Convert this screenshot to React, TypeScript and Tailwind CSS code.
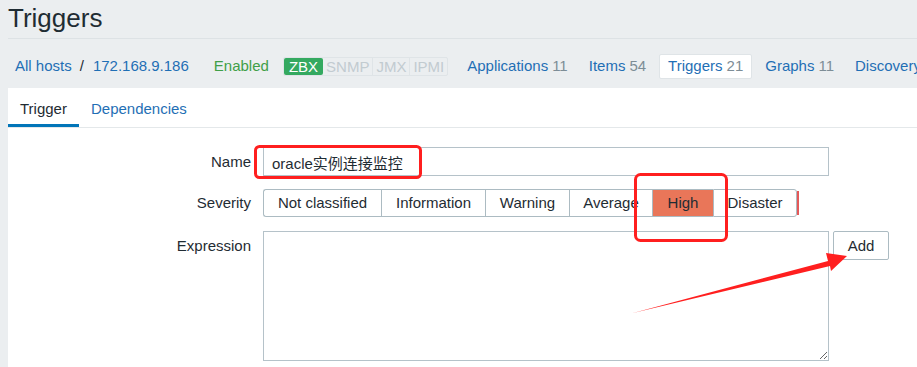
const severities = [
  { label: "Not classified", w: "w-[118px]" },
  { label: "Information", w: "w-[104px]" },
  { label: "Warning", w: "w-[84px]" },
  { label: "Average", w: "w-[83px]" },
  { label: "High", w: "w-[61px]" },
  { label: "Disaster", w: "w-[84px]" },
];

const hostTabs = [
  { label: "Applications", count: "11" },
  { label: "Items", count: "54" },
  { label: "Triggers", count: "21", active: true },
  { label: "Graphs", count: "11" },
  { label: "Discovery rules", count: "" },
];

export default function App() {
  return (
    <div
      className="relative h-[367px] w-[917px] overflow-hidden bg-[#ebeef0] text-[15px] text-[#1f2c33]"
      style={{ fontFamily: '"Liberation Sans", "Noto Sans CJK SC", Arial, sans-serif' }}
    >
      {/* ─── Header ─── */}
      <div className="ml-2 h-[39px] border-b border-[#dde2e5] pt-[5px] text-[26px] leading-none">
        Triggers
      </div>

      {/* ─── Host nav ─── */}
      <div className="ml-2 flex h-[49px] items-center whitespace-nowrap pt-[5px]">
        <a className="ml-[7px] text-[#1f6fb5]">All hosts</a>
        <span className="ml-2">/</span>
        <a className="ml-[9px] text-[#1f6fb5]">172.168.9.186</a>
        <span className="ml-[25px] text-[#3f9f48]">Enabled</span>
        <div className="ml-[14px] flex h-[19px] items-stretch rounded-[2px] border border-[#dfe4e7] text-[15px] leading-[17px]">
          <span className="rounded-[2px] bg-[#34a960] px-[5px] text-white">ZBX</span>
          <span className="border-r border-[#dfe4e7] px-[3px] text-[#c2cbd0]">SNMP</span>
          <span className="border-r border-[#dfe4e7] px-[3px] text-[#c2cbd0]">JMX</span>
          <span className="px-[3px] text-[#c2cbd0]">IPMI</span>
        </div>
        <div className="ml-[11px] flex items-center gap-[5px]">
          {hostTabs.map((t) => (
            <div
              key={t.label}
              className={`flex h-[25px] items-center rounded-[2px] px-2 ${
                t.active ? "border border-[#dfe4e7] bg-white" : ""
              }`}
            >
              <span className="text-[#1f6fb5]">{t.label}</span>
              {t.count && <span className="ml-1 text-[#7d8d96]">{t.count}</span>}
            </div>
          ))}
        </div>
      </div>

      {/* ─── Form panel ─── */}
      <div className="ml-2 h-[279px] bg-white">
        <div className="flex h-[40px] border-b border-[#e4e8ea]">
          <div className="relative flex items-center px-3 pt-[3px]">
            Trigger
            <span className="absolute bottom-0 left-0 right-0 h-[3px] bg-[#0275b8]" />
          </div>
          <div className="flex items-center px-3 pt-[3px] text-[#1f6fb5]">Dependencies</div>
        </div>

        <div className="mt-[19px] flex items-center">
          <label className="w-[255px] pr-3 pt-px text-right">Name</label>
          <input
            readOnly
            value="oracle实例连接监控"
            className="h-[29px] w-[566px] border border-[#b5c2c9] px-2 pt-px text-[15px] text-[#1f2c33] outline-none"
          />
        </div>

        <div className="mt-[13px] flex items-center">
          <label className="w-[255px] pr-3 pt-px text-right">Severity</label>
          <div className="flex h-[28px]">
            {severities.map((s, i) => (
              <div
                key={s.label}
                className={`flex items-center justify-center whitespace-nowrap border-y border-l pt-px border-[#acbbc2] ${s.w} ${
                  i === 0 ? "rounded-l-[3px]" : ""
                } ${i === severities.length - 1 ? "rounded-r-[3px] border-r" : ""} ${
                  s.label === "High" ? "border-[#8fa1ab] bg-[#e97659]" : "bg-white"
                }`}
              >
                {s.label}
              </div>
            ))}
          </div>
          <span className="h-[24px] w-[2px] bg-[#e45959]" />
        </div>

        <div className="mt-[14px] flex items-start">
          <label className="w-[255px] pr-3 pt-[4px] text-right">Expression</label>
          <textarea
            readOnly
            className="h-[130px] w-[566px] border border-[#b5c2c9] outline-none"
          />
          <button className="ml-1 h-[29px] w-[56px] rounded-[2px] border border-[#acbbc2] bg-white pt-px text-[15px]">
            Add
          </button>
        </div>
      </div>

      {/* ─── Red annotations ─── */}
      <svg className="pointer-events-none absolute left-0 top-0" width="917" height="367">
        <rect x="255.5" y="146.5" width="165" height="31" rx="4" fill="none" stroke="#ff1f1f" strokeWidth="3" />
        <rect x="635.5" y="174.5" width="91" height="66" rx="5" fill="none" stroke="#ff1f1f" strokeWidth="3" />
        <polygon points="633,313 828,261 826,253 847,256 831,271 830,266" fill="#ff1f1f" />
      </svg>
    </div>
  );
}
